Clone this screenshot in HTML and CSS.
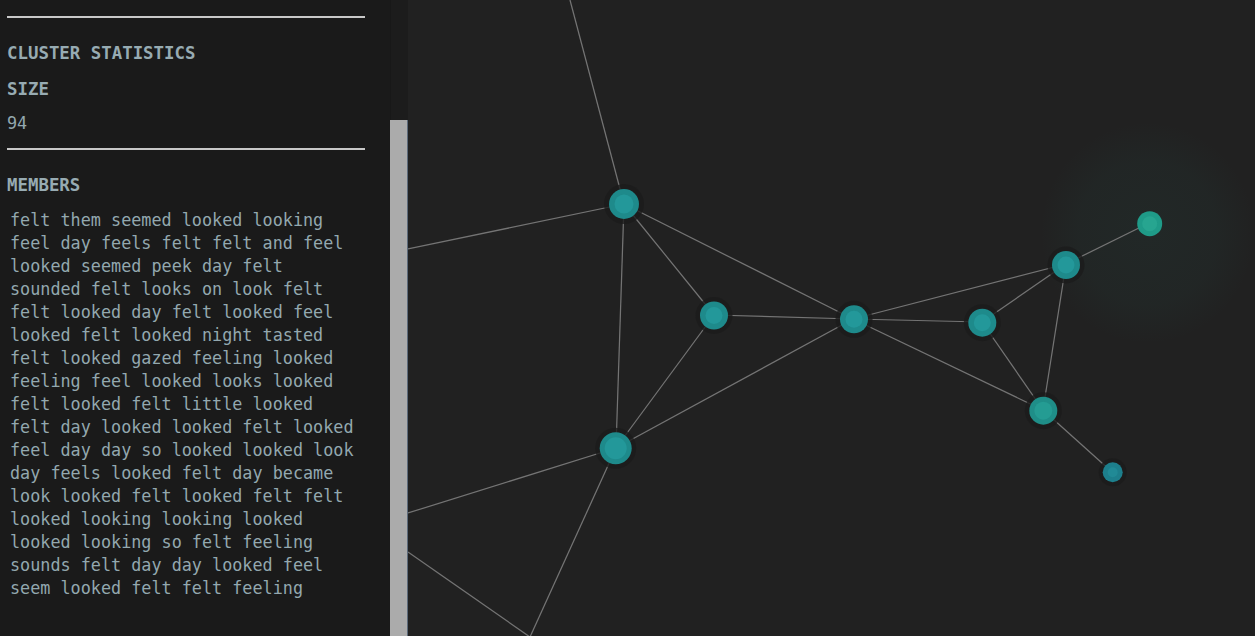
FILE: index.html
```html
<!DOCTYPE html>
<html lang="en">
<head>
<meta charset="utf-8">
<title>Cluster statistics</title>
<link rel="stylesheet" href="styles.css">
</head>
<body>
<div class="app">
  <aside class="sidebar">
    <hr class="rule">
    <h2 class="title">CLUSTER STATISTICS</h2>
    <h3 class="label">SIZE</h3>
    <div class="value">94</div>
    <hr class="rule rule-mid">
    <h3 class="title">MEMBERS</h3>
    <div class="members">felt them seemed looked looking
feel day feels felt felt and feel
looked seemed peek day felt
sounded felt looks on look felt
felt looked day felt looked feel
looked felt looked night tasted
felt looked gazed feeling looked
feeling feel looked looks looked
felt looked felt little looked
felt day looked looked felt looked
feel day day so looked looked look
day feels looked felt day became
look looked felt looked felt felt
looked looking looking looked
looked looking so felt feeling
sounds felt day day looked feel
seem looked felt felt feeling</div>
  </aside>
  <div class="scrollbar"><div class="thumb"></div></div>
  <main class="graph">
    <svg class="graph-svg" width="847" height="636" viewBox="408 0 847 636" xmlns="http://www.w3.org/2000/svg">
      <defs>
        <radialGradient id="glow" cx="0.5" cy="0.5" r="0.5">
          <stop offset="0" stop-color="#2a8f80" stop-opacity="0.065"/>
          <stop offset="0.65" stop-color="#2a8f80" stop-opacity="0.045"/>
          <stop offset="1" stop-color="#2a8f80" stop-opacity="0"/>
        </radialGradient>
      </defs>
      <rect x="1040" y="122" width="215" height="222" rx="70" fill="url(#glow)"/>
      <g class="edges">
        <line x1="570" y1="0" x2="624" y2="204"/>
        <line x1="408" y1="249" x2="624" y2="204"/>
        <line x1="624" y1="204" x2="714" y2="315"/>
        <line x1="624" y1="204" x2="853" y2="319"/>
        <line x1="624" y1="204" x2="616" y2="448"/>
        <line x1="714" y1="315" x2="853" y2="319"/>
        <line x1="714" y1="315" x2="616" y2="448"/>
        <line x1="853" y1="319" x2="616" y2="448"/>
        <line x1="853" y1="319" x2="982" y2="322"/>
        <line x1="853" y1="319" x2="1066" y2="264"/>
        <line x1="853" y1="319" x2="1043" y2="410"/>
        <line x1="982" y1="322" x2="1066" y2="264"/>
        <line x1="982" y1="322" x2="1043" y2="410"/>
        <line x1="1066" y1="264" x2="1149" y2="223"/>
        <line x1="1066" y1="264" x2="1043" y2="410"/>
        <line x1="1043" y1="410" x2="1112" y2="472"/>
        <line x1="616" y1="448" x2="408" y2="513"/>
        <line x1="616" y1="448" x2="530" y2="637"/>
        <line x1="408" y1="552" x2="530" y2="637"/>
      </g>
      <g class="nodes">
        <g class="node">
          <circle class="halo" cx="624" cy="204" r="20"/>
          <circle class="outer" cx="624" cy="204" r="15"/>
          <circle class="inner" cx="624" cy="204" r="9.5"/>
        </g>
        <g class="node">
          <circle class="halo" cx="714" cy="315.5" r="18.5"/>
          <circle class="outer" cx="714" cy="315.5" r="14"/>
          <circle class="inner" cx="714" cy="315.5" r="8.5"/>
        </g>
        <g class="node">
          <circle class="halo" cx="854" cy="319.3" r="18.5"/>
          <circle class="outer" cx="854" cy="319.3" r="14"/>
          <circle class="inner" cx="854" cy="319.3" r="8.5"/>
        </g>
        <g class="node">
          <circle class="halo" cx="982.3" cy="322.7" r="18.5"/>
          <circle class="outer" cx="982.3" cy="322.7" r="14"/>
          <circle class="inner" cx="982.3" cy="322.7" r="8.5"/>
        </g>
        <g class="node">
          <circle class="halo" cx="1066" cy="265" r="18.5"/>
          <circle class="outer" cx="1066" cy="265" r="14"/>
          <circle class="inner" cx="1066" cy="265" r="8.5"/>
        </g>
        <g class="node node-active">
          <circle class="outer" cx="1149.7" cy="223.7" r="12.5"/>
          <circle class="inner" cx="1149.7" cy="223.7" r="7.5"/>
        </g>
        <g class="node node-green">
          <circle class="halo" cx="1043.3" cy="410.7" r="18.5"/>
          <circle class="outer" cx="1043.3" cy="410.7" r="14"/>
          <circle class="inner" cx="1043.3" cy="410.7" r="9"/>
        </g>
        <g class="node node-small">
          <circle class="halo" cx="1112.7" cy="472.3" r="14"/>
          <circle class="outer" cx="1112.7" cy="472.3" r="10"/>
          <circle class="inner" cx="1112.7" cy="472.3" r="5"/>
        </g>
        <g class="node">
          <circle class="halo" cx="615.7" cy="448.3" r="20.5"/>
          <circle class="outer" cx="615.7" cy="448.3" r="16"/>
          <circle class="inner" cx="615.7" cy="448.3" r="11"/>
        </g>
      </g>
    </svg>
  </main>
</div>
</body>
</html>
```

FILE: styles.css
```css
html, body {
  margin: 0;
  padding: 0;
  height: 100%;
  background: #212121;
  overflow: hidden;
}

.app {
  display: flex;
  height: 636px;
  width: 1255px;
}

.sidebar {
  width: 390px;
  flex: none;
  box-sizing: border-box;
  background: #1a1a1a;
  padding: 16px 25px 0 7px;
  font-family: "DejaVu Sans Mono", "Liberation Mono", monospace;
  color: #93a8af;
}

.rule {
  margin: 0;
  height: 0;
  border: 0;
  border-top: 2px solid #c8c8c8;
}

.rule-mid {
  margin-top: 15px;
}

.title,
.label {
  margin: 25px 0 0;
  font-size: 17.4px;
  line-height: 20px;
  font-weight: bold;
  color: #97abb2;
}

.label {
  margin-top: 16px;
}

.value {
  margin-top: 14px;
  font-size: 16.8px;
  line-height: 20px;
}

.members {
  margin-top: 14px;
  padding-left: 3px;
  font-size: 16.8px;
  line-height: 23px;
  white-space: pre-line;
}

.scrollbar {
  width: 17px;
  flex: none;
  background: #1c1c1c;
  border-left: 1px solid #181818;
  display: flex;
  flex-direction: column;
}

.thumb {
  margin-top: 120px;
  margin-left: -1px;
  flex: 1;
  background: #ababab;
  border-right: 1px solid #5c6a7a;
}

.graph {
  flex: 1;
  background: #212121;
  overflow: hidden;
}

.graph-svg {
  display: block;
}

.edges line {
  stroke: #747474;
  stroke-width: 1.25;
}

.halo {
  fill: #1b1b1b;
  opacity: 0.8;
}

.outer {
  fill: #1e8a8b;
}

.inner {
  fill: #23989a;
}

.node-active .outer {
  fill: #1f9b88;
}

.node-active .inner {
  fill: #27a590;
}

.node-green .outer {
  fill: #1f8e88;
}

.node-green .inner {
  fill: #249c93;
}

.node-small .outer {
  fill: #1d7f8c;
}

.node-small .inner {
  fill: #218a96;
}
```
